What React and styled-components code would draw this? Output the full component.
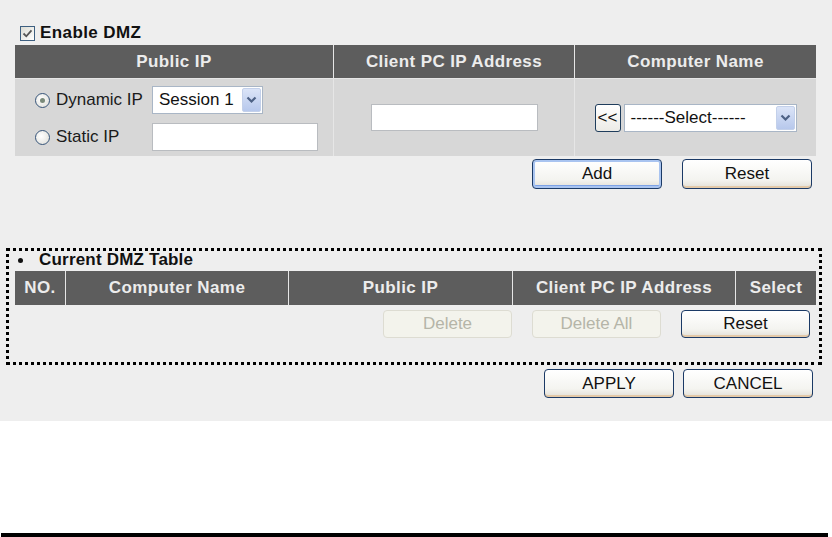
import React from "react";
import styled, { createGlobalStyle, css } from "styled-components";

const Global = createGlobalStyle`
  html, body { margin: 0; padding: 0; background: #ffffff; }
  body { font-family: "Liberation Sans", Arial, sans-serif; }
  * { box-sizing: border-box; }
`;

const Page = styled.div`
  width: 832px;
  height: 537px;
  display: flex;
  flex-direction: column;
  background: #ffffff;
`;

const Panel = styled.div`
  height: 421px;
  background: #eeeeee;
  padding: 22px 10px 0 6px;
  display: flex;
  flex-direction: column;
`;

const EnableRow = styled.label`
  display: flex;
  align-items: center;
  gap: 5px;
  height: 20px;
  margin: 1px 0 2px 14px;
  font-size: 17px;
  font-weight: bold;
  letter-spacing: 0.4px;
  color: #111;
`;

const CheckBox = styled.span`
  width: 15px;
  height: 15px;
  border: 1px solid #3d5f80;
  background: linear-gradient(135deg, #dcdcd4, #ffffff);
  display: flex;
  align-items: center;
  justify-content: center;
`;

const Table = styled.div`
  display: grid;
  grid-template-columns: ${(p) => p.$cols};
  gap: 1px;
  background: #e6e6e6;
  margin: ${(p) => p.$margin || "0 6px 0 9px"};
`;

const HeadCell = styled.div`
  height: ${(p) => p.$h || 33}px;
  background: #5d5d5d;
  color: #ececec;
  font-size: 17px;
  font-weight: bold;
  letter-spacing: 0.4px;
  display: flex;
  align-items: center;
  justify-content: center;
  white-space: nowrap;
`;

const BodyCell = styled.div`
  height: 77px;
  background: #d7d7d7;
  display: flex;
  ${(p) =>
    p.$stack
      ? css`
          flex-direction: column;
          gap: 9px;
          padding: 7px 0 0 20px;
        `
      : css`
          align-items: center;
          justify-content: center;
        `}
`;

const FieldRow = styled.div`
  display: flex;
  align-items: center;
  height: 28px;
`;

const Radio = styled.span`
  width: 15px;
  height: 15px;
  border-radius: 50%;
  border: 1px solid #37557a;
  background: radial-gradient(circle at 40% 40%, #ffffff, #dcdcd6);
  display: flex;
  align-items: center;
  justify-content: center;
  margin-right: 6px;
  &::after {
    content: "";
    width: 5px;
    height: 5px;
    border-radius: 50%;
    background: ${(p) => (p.$on ? "#7a8a7a" : "transparent")};
  }
`;

const Label = styled.span`
  width: 96px;
  font-size: 17px;
  color: #1a1a1a;
`;

const TextInput = styled.div`
  width: ${(p) => p.$w}px;
  height: ${(p) => p.$h || 28}px;
  background: #ffffff;
  border: 1px solid #b9bcc0;
`;

const SelectBox = styled.div`
  width: ${(p) => p.$w}px;
  height: 28px;
  background: #ffffff;
  border: 1px solid #a9b6c6;
  display: flex;
  align-items: center;
  padding: 1px 1px 1px 6px;
  font-size: 17px;
  color: #111;
`;

const SelectText = styled.span`
  flex: 1;
  white-space: nowrap;
`;

const ArrowBox = styled.span`
  width: 19px;
  height: 24px;
  background: linear-gradient(#dbe4f7, #b7c8ec);
  border: 1px solid #c3d0ea;
  border-radius: 2px;
  display: flex;
  align-items: center;
  justify-content: center;
`;

const SmallBtn = styled.button`
  width: 26px;
  height: 28px;
  margin-right: 3px;
  padding: 0;
  font-family: "Liberation Sans", Arial, sans-serif;
  font-size: 17px;
  color: #111;
  border: 1px solid #1f3d5c;
  border-radius: 3px;
  background: linear-gradient(#ffffff, #ecebe6);
`;

const ButtonRow = styled.div`
  display: flex;
  justify-content: flex-end;
  gap: ${(p) => p.$gap || 20}px;
  margin: ${(p) => p.$margin};
`;

const Button = styled.button`
  width: ${(p) => p.$w || 130}px;
  height: ${(p) => p.$h || 30}px;
  padding: 0;
  font-family: "Liberation Sans", Arial, sans-serif;
  font-size: 17px;
  color: #111;
  border: 1px solid #1b3a66;
  border-radius: 4px;
  background: linear-gradient(#ffffff 0%, #f4f4f0 70%, #e2dfd6 100%);
  box-shadow: inset 0 -2px 0 #e3c9a8;
  ${(p) =>
    p.$focus &&
    css`
      box-shadow: inset 0 0 0 2px #a9c4f0, inset 0 -3px 0 #7da2e6;
    `}
  ${(p) =>
    p.disabled &&
    css`
      color: #b5b5a8;
      border-color: #dddcd2;
      background: #f3f3ec;
      box-shadow: none;
    `}
`;

const DmzBox = styled.div`
  border: 3px dotted #000;
  margin-top: 59px;
  padding: 0 3px 24px 6px;
  display: flex;
  flex-direction: column;
`;

const DmzTitle = styled.div`
  height: 18px;
  display: flex;
  align-items: center;
  margin: 0 0 2px 3px;
  font-size: 17px;
  font-weight: bold;
  letter-spacing: 0.2px;
  color: #111;
`;

const Bullet = styled.span`
  width: 5px;
  height: 5px;
  border-radius: 50%;
  background: #111;
  margin-right: 16px;
`;

const Footer = styled.div`
  flex: 1;
  display: flex;
  flex-direction: column;
  justify-content: flex-end;
  padding: 0 4px 0 1px;
`;

const Rule = styled.div`
  height: 4px;
  background: #000;
`;

const Chevron = () => (
  <svg width="11" height="8" viewBox="0 0 11 8">
    <path d="M1.5 1.5 L5.5 5.5 L9.5 1.5" fill="none" stroke="#4d6185" strokeWidth="2.2" />
  </svg>
);

const Check = () => (
  <svg width="11" height="11" viewBox="0 0 11 11">
    <path d="M1.5 5.5 L4.3 8.3 L9.5 2.3" fill="none" stroke="#555" strokeWidth="1.8" />
  </svg>
);

export default function App() {
  return (
    <Page>
      <Global />
      <Panel>
        <EnableRow>
          <CheckBox>
            <Check />
          </CheckBox>
          Enable DMZ
        </EnableRow>

        <Table $cols="318px 240px 241px">
          <HeadCell>Public IP</HeadCell>
          <HeadCell>Client PC IP Address</HeadCell>
          <HeadCell>Computer Name</HeadCell>
          <BodyCell $stack>
            <FieldRow>
              <Radio $on />
              <Label>Dynamic IP</Label>
              <SelectBox $w={111}>
                <SelectText>Session 1</SelectText>
                <ArrowBox>
                  <Chevron />
                </ArrowBox>
              </SelectBox>
            </FieldRow>
            <FieldRow>
              <Radio />
              <Label>Static IP</Label>
              <TextInput $w={166} />
            </FieldRow>
          </BodyCell>
          <BodyCell>
            <TextInput $w={167} $h={27} />
          </BodyCell>
          <BodyCell>
            <SmallBtn>&lt;&lt;</SmallBtn>
            <SelectBox $w={173}>
              <SelectText>------Select------</SelectText>
              <ArrowBox>
                <Chevron />
              </ArrowBox>
            </SelectBox>
          </BodyCell>
        </Table>

        <ButtonRow $margin="3px 10px 0 0">
          <Button $focus>Add</Button>
          <Button>Reset</Button>
        </ButtonRow>

        <DmzBox>
          <DmzTitle>
            <Bullet />
            Current DMZ Table
          </DmzTitle>
          <Table $cols="50px 222px 223px 222px 80px" $margin="0">
            <HeadCell $h={34}>NO.</HeadCell>
            <HeadCell $h={34}>Computer Name</HeadCell>
            <HeadCell $h={34}>Public IP</HeadCell>
            <HeadCell $h={34}>Client PC IP Address</HeadCell>
            <HeadCell $h={34}>Select</HeadCell>
          </Table>
          <ButtonRow $margin="5px 6px 0 0">
            <Button $w={129} $h={28} disabled>Delete</Button>
            <Button $w={129} $h={28} disabled>Delete All</Button>
            <Button $w={129} $h={28}>Reset</Button>
          </ButtonRow>
        </DmzBox>

        <ButtonRow $gap={9} $margin="4px 9px 0 0">
          <Button $h={29}>APPLY</Button>
          <Button $h={29}>CANCEL</Button>
        </ButtonRow>
      </Panel>
      <Footer>
        <Rule />
      </Footer>
    </Page>
  );
}
